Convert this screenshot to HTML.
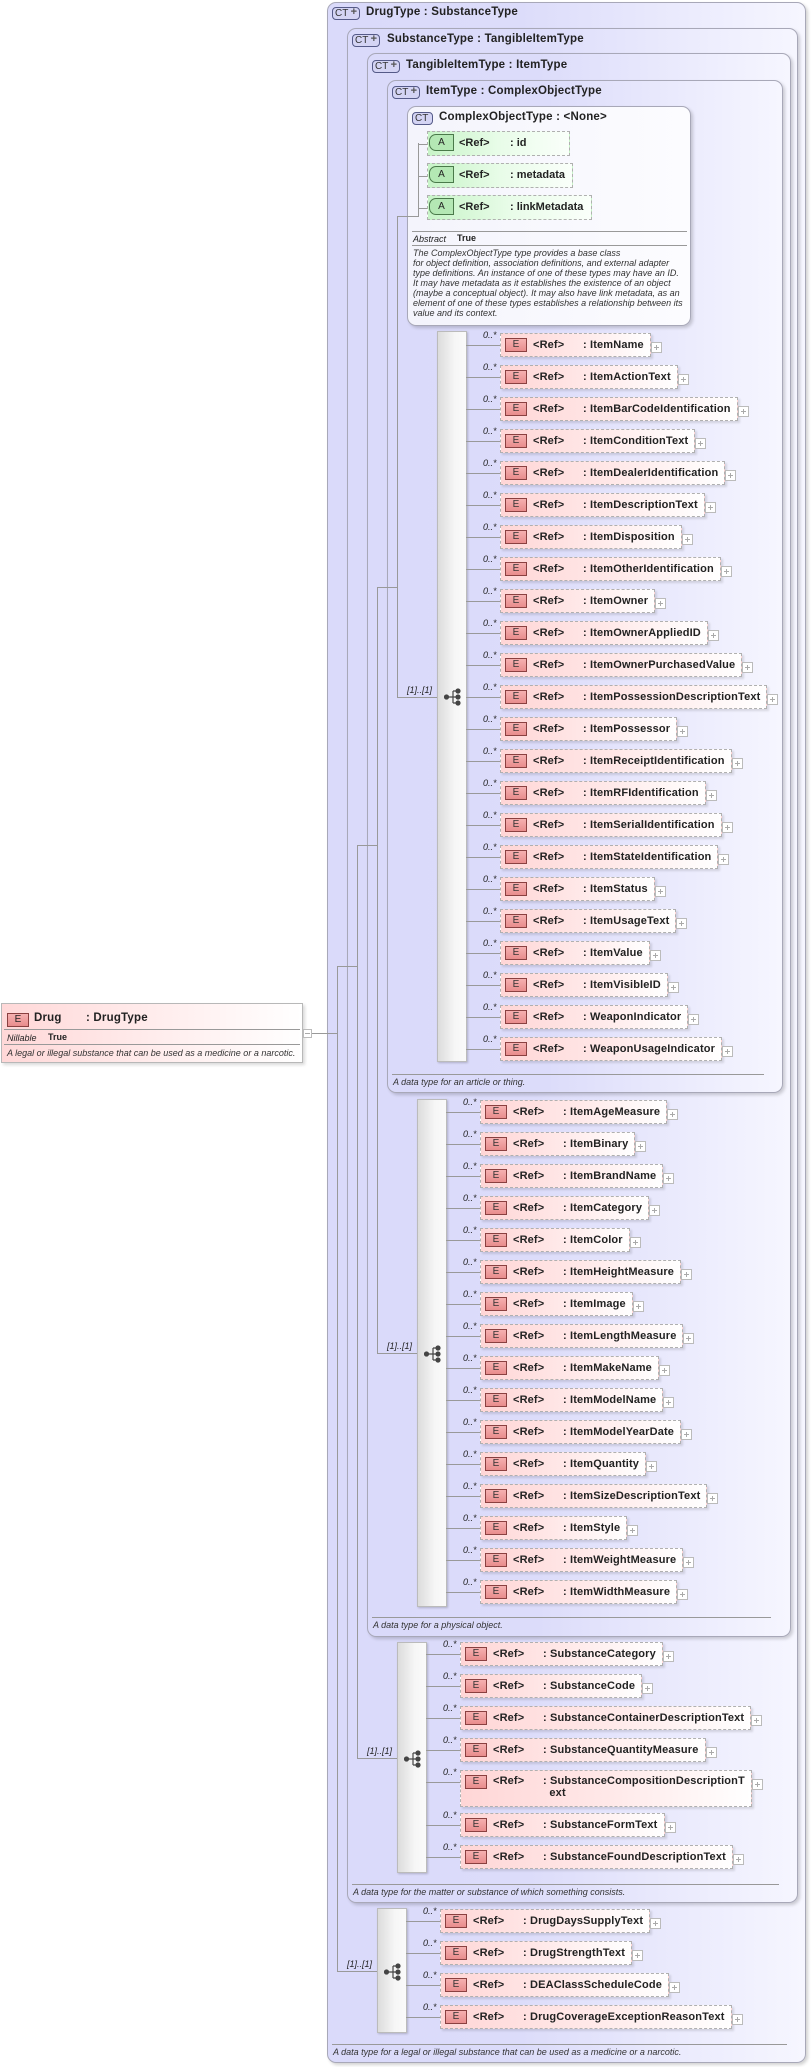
<!DOCTYPE html>
<html><head><meta charset="utf-8"><style>
*{margin:0;padding:0;box-sizing:border-box}
body{width:811px;height:2067px;background:#fff;position:relative;overflow:hidden;font-family:"Liberation Sans",Arial,sans-serif;color:#222}
.t{position:absolute;border:1px solid #a8a8b8;border-radius:9px;background:linear-gradient(90deg,#dadafa 0%,#dcdcfa 40%,#f6f6ff 100%);box-shadow:2px 2px 3px rgba(0,0,0,.18)}
.h{position:absolute;font-weight:bold;font-size:11.5px;white-space:nowrap;letter-spacing:.2px}
.ct{position:absolute;width:28px;height:13px;border:1px solid #555a88;border-radius:4px;background:#d4d4f4;font-size:10px;line-height:11px;color:#333;padding-left:2px}
.ct::after{content:"+";position:absolute;right:2px;top:-1px;font-weight:bold;font-size:11px;color:#555}
.l{position:absolute;background:#999}
.bar{position:absolute;border:1px solid #bbb;background:linear-gradient(90deg,#dcdcdc,#f6f6f6 60%,#fafafa);box-shadow:1px 1px 2px rgba(0,0,0,.2)}
.r{position:absolute;height:24px;border:1px dashed #b0b0b0;background:linear-gradient(90deg,#ffd6d6,#ffe8e8 50%,#fff);font-weight:bold;font-size:11px;letter-spacing:.15px;line-height:22px;white-space:nowrap;padding-left:32px;padding-right:6px;box-shadow:2px 2px 2px rgba(0,0,0,.12)}
.r i{position:absolute;left:4px;top:4px;width:22px;height:14px;border:1px solid #8a4040;background:linear-gradient(#f6b0b0,#e88c8c);font-style:normal;font-weight:normal;font-size:10px;line-height:12px;text-align:center;color:#333}
.r b{display:inline-block;width:50px}
.r::before{content:"";position:absolute;left:-35px;top:11px;width:34px;height:1px;background:#999}
.r::after{content:"";position:absolute;right:-12px;top:8px;width:9px;height:9px;border:1px solid #bbb;background:linear-gradient(#aaa,#aaa) center/5px 1px no-repeat,linear-gradient(#aaa,#aaa) center/1px 5px no-repeat,#fff}
.r em{position:absolute;left:-18px;top:-4px;font-size:9px;font-weight:normal;line-height:10px;letter-spacing:0}
.a{position:absolute;height:25px;border:1px dashed #b0b0b0;background:linear-gradient(90deg,#c8f4c8,#e8fce8 50%,#fafffa);font-weight:bold;font-size:11px;line-height:23px;white-space:nowrap;padding-left:31px;padding-right:6px;left:427px}
.a i{position:absolute;left:1px;top:2px;width:25px;height:17px;border:1px solid #4a7a4a;border-radius:7px 0 0 7px;background:#b4e8b4;font-style:normal;font-weight:normal;font-size:10px;line-height:15px;text-align:center}
.a b{display:inline-block;width:51px}
.a::before{content:"";position:absolute;left:-10px;top:12px;width:9px;height:1px;background:#999}
.d{position:absolute;font-size:9px;font-style:italic;color:#333;white-space:nowrap}
.hr{position:absolute;height:1px;background:#999}
.m{position:absolute;font-size:9px;font-style:italic;white-space:nowrap}
svg.s{position:absolute}
</style></head><body>

<div class="t" style="left:327px;top:2px;width:479px;height:2061px"></div>
<div class="ct" style="left:332px;top:7px">CT</div><div class="h" style="left:366px;top:6px">DrugType : SubstanceType</div>
<div class="t" style="left:347px;top:28px;width:451px;height:1875px"></div>
<div class="ct" style="left:352px;top:34px">CT</div><div class="h" style="left:387px;top:33px">SubstanceType : TangibleItemType</div>
<div class="t" style="left:367px;top:53px;width:424px;height:1584px"></div>
<div class="ct" style="left:372px;top:60px">CT</div><div class="h" style="left:406px;top:59px">TangibleItemType : ItemType</div>
<div class="t" style="left:387px;top:80px;width:396px;height:1013px"></div>
<div class="ct" style="left:392px;top:86px">CT</div><div class="h" style="left:426px;top:85px">ItemType : ComplexObjectType</div>
<div class="t" style="left:407px;top:106px;width:284px;height:220px;background:linear-gradient(90deg,#f4f4fc,#fcfcff)"></div>
<div class="ct" style="left:412px;top:112px;width:21px">CT</div><div class="h" style="left:439px;top:111px">ComplexObjectType : &lt;None&gt;</div>
<style>.ct[style*="width:21px"]::after{content:""}</style>

<div class="l" style="left:418px;top:143px;width:1px;height:74px"></div>
<div class="a" style="top:131px;width:143px"><i>A</i><b>&lt;Ref&gt;</b>: id</div>
<div class="a" style="top:163px;width:146px"><i>A</i><b>&lt;Ref&gt;</b>: metadata</div>
<div class="a" style="top:195px;width:165px"><i>A</i><b>&lt;Ref&gt;</b>: linkMetadata</div>
<div class="hr" style="left:412px;top:231px;width:275px"></div>
<div class="m" style="left:413px;top:234px">Abstract</div><div class="m" style="left:457px;top:233px;font-style:normal;font-weight:bold">True</div>
<div class="hr" style="left:412px;top:245px;width:275px"></div>
<div class="d" style="left:413px;top:248px;line-height:10px">The ComplexObjectType type provides a base class<br>for object definition, association definitions, and external adapter<br>type definitions. An instance of one of these types may have an ID.<br>It may have metadata as it establishes the existence of an object<br>(maybe a conceptual object). It may also have link metadata, as an<br>element of one of these types establishes a relationship between its<br>value and its context.</div>

<div class="l" style="left:397px;top:216px;width:22px;height:1px"></div>
<div class="l" style="left:397px;top:216px;width:1px;height:481px"></div>
<div class="l" style="left:397px;top:697px;width:40px;height:1px"></div>
<div class="l" style="left:377px;top:587px;width:20px;height:1px"></div>
<div class="l" style="left:377px;top:587px;width:1px;height:766px"></div>
<div class="l" style="left:377px;top:1353px;width:40px;height:1px"></div>
<div class="l" style="left:357px;top:845px;width:20px;height:1px"></div>
<div class="l" style="left:357px;top:845px;width:1px;height:913px"></div>
<div class="l" style="left:357px;top:1758px;width:40px;height:1px"></div>
<div class="l" style="left:337px;top:966px;width:20px;height:1px"></div>
<div class="l" style="left:337px;top:966px;width:1px;height:1005px"></div>
<div class="l" style="left:337px;top:1971px;width:40px;height:1px"></div>
<div class="l" style="left:312px;top:1033px;width:25px;height:1px"></div>

<div class="m" style="left:407px;top:685px">[1]..[1]</div>
<div class="m" style="left:387px;top:1341px">[1]..[1]</div>
<div class="m" style="left:367px;top:1746px">[1]..[1]</div>
<div class="m" style="left:347px;top:1959px">[1]..[1]</div>

<div class="bar" style="left:437px;top:331px;width:30px;height:731px"></div>
<div class="bar" style="left:417px;top:1099px;width:30px;height:508px"></div>
<div class="bar" style="left:397px;top:1642px;width:30px;height:231px"></div>
<div class="bar" style="left:377px;top:1908px;width:30px;height:125px"></div>

<svg class="s" style="left:444px;top:688px" width="18" height="18" viewBox="0 0 18 18"><g fill="#444" stroke="#444" stroke-width="1.2"><circle cx="2.5" cy="9" r="2"/><circle cx="14" cy="3" r="2"/><circle cx="14" cy="9" r="2"/><circle cx="14" cy="15" r="2"/><path d="M2.5 9H14M9 3V15M9 3H14M9 15H14" fill="none"/></g></svg>
<svg class="s" style="left:424px;top:1345px" width="18" height="18" viewBox="0 0 18 18"><g fill="#444" stroke="#444" stroke-width="1.2"><circle cx="2.5" cy="9" r="2"/><circle cx="14" cy="3" r="2"/><circle cx="14" cy="9" r="2"/><circle cx="14" cy="15" r="2"/><path d="M2.5 9H14M9 3V15M9 3H14M9 15H14" fill="none"/></g></svg>
<svg class="s" style="left:404px;top:1750px" width="18" height="18" viewBox="0 0 18 18"><g fill="#444" stroke="#444" stroke-width="1.2"><circle cx="2.5" cy="9" r="2"/><circle cx="14" cy="3" r="2"/><circle cx="14" cy="9" r="2"/><circle cx="14" cy="15" r="2"/><path d="M2.5 9H14M9 3V15M9 3H14M9 15H14" fill="none"/></g></svg>
<svg class="s" style="left:384px;top:1963px" width="18" height="18" viewBox="0 0 18 18"><g fill="#444" stroke="#444" stroke-width="1.2"><circle cx="2.5" cy="9" r="2"/><circle cx="14" cy="3" r="2"/><circle cx="14" cy="9" r="2"/><circle cx="14" cy="15" r="2"/><path d="M2.5 9H14M9 3V15M9 3H14M9 15H14" fill="none"/></g></svg>

<div class="r" style="left:500px;top:333px"><em>0..*</em><i>E</i><b>&lt;Ref&gt;</b>: ItemName</div>
<div class="r" style="left:500px;top:365px"><em>0..*</em><i>E</i><b>&lt;Ref&gt;</b>: ItemActionText</div>
<div class="r" style="left:500px;top:397px"><em>0..*</em><i>E</i><b>&lt;Ref&gt;</b>: ItemBarCodeIdentification</div>
<div class="r" style="left:500px;top:429px"><em>0..*</em><i>E</i><b>&lt;Ref&gt;</b>: ItemConditionText</div>
<div class="r" style="left:500px;top:461px"><em>0..*</em><i>E</i><b>&lt;Ref&gt;</b>: ItemDealerIdentification</div>
<div class="r" style="left:500px;top:493px"><em>0..*</em><i>E</i><b>&lt;Ref&gt;</b>: ItemDescriptionText</div>
<div class="r" style="left:500px;top:525px"><em>0..*</em><i>E</i><b>&lt;Ref&gt;</b>: ItemDisposition</div>
<div class="r" style="left:500px;top:557px"><em>0..*</em><i>E</i><b>&lt;Ref&gt;</b>: ItemOtherIdentification</div>
<div class="r" style="left:500px;top:589px"><em>0..*</em><i>E</i><b>&lt;Ref&gt;</b>: ItemOwner</div>
<div class="r" style="left:500px;top:621px"><em>0..*</em><i>E</i><b>&lt;Ref&gt;</b>: ItemOwnerAppliedID</div>
<div class="r" style="left:500px;top:653px"><em>0..*</em><i>E</i><b>&lt;Ref&gt;</b>: ItemOwnerPurchasedValue</div>
<div class="r" style="left:500px;top:685px"><em>0..*</em><i>E</i><b>&lt;Ref&gt;</b>: ItemPossessionDescriptionText</div>
<div class="r" style="left:500px;top:717px"><em>0..*</em><i>E</i><b>&lt;Ref&gt;</b>: ItemPossessor</div>
<div class="r" style="left:500px;top:749px"><em>0..*</em><i>E</i><b>&lt;Ref&gt;</b>: ItemReceiptIdentification</div>
<div class="r" style="left:500px;top:781px"><em>0..*</em><i>E</i><b>&lt;Ref&gt;</b>: ItemRFIdentification</div>
<div class="r" style="left:500px;top:813px"><em>0..*</em><i>E</i><b>&lt;Ref&gt;</b>: ItemSerialIdentification</div>
<div class="r" style="left:500px;top:845px"><em>0..*</em><i>E</i><b>&lt;Ref&gt;</b>: ItemStateIdentification</div>
<div class="r" style="left:500px;top:877px"><em>0..*</em><i>E</i><b>&lt;Ref&gt;</b>: ItemStatus</div>
<div class="r" style="left:500px;top:909px"><em>0..*</em><i>E</i><b>&lt;Ref&gt;</b>: ItemUsageText</div>
<div class="r" style="left:500px;top:941px"><em>0..*</em><i>E</i><b>&lt;Ref&gt;</b>: ItemValue</div>
<div class="r" style="left:500px;top:973px"><em>0..*</em><i>E</i><b>&lt;Ref&gt;</b>: ItemVisibleID</div>
<div class="r" style="left:500px;top:1005px"><em>0..*</em><i>E</i><b>&lt;Ref&gt;</b>: WeaponIndicator</div>
<div class="r" style="left:500px;top:1037px"><em>0..*</em><i>E</i><b>&lt;Ref&gt;</b>: WeaponUsageIndicator</div>
<div class="hr" style="left:392px;top:1074px;width:372px"></div>
<div class="d" style="left:393px;top:1077px">A data type for an article or thing.</div>

<div class="r" style="left:480px;top:1100px"><em>0..*</em><i>E</i><b>&lt;Ref&gt;</b>: ItemAgeMeasure</div>
<div class="r" style="left:480px;top:1132px"><em>0..*</em><i>E</i><b>&lt;Ref&gt;</b>: ItemBinary</div>
<div class="r" style="left:480px;top:1164px"><em>0..*</em><i>E</i><b>&lt;Ref&gt;</b>: ItemBrandName</div>
<div class="r" style="left:480px;top:1196px"><em>0..*</em><i>E</i><b>&lt;Ref&gt;</b>: ItemCategory</div>
<div class="r" style="left:480px;top:1228px"><em>0..*</em><i>E</i><b>&lt;Ref&gt;</b>: ItemColor</div>
<div class="r" style="left:480px;top:1260px"><em>0..*</em><i>E</i><b>&lt;Ref&gt;</b>: ItemHeightMeasure</div>
<div class="r" style="left:480px;top:1292px"><em>0..*</em><i>E</i><b>&lt;Ref&gt;</b>: ItemImage</div>
<div class="r" style="left:480px;top:1324px"><em>0..*</em><i>E</i><b>&lt;Ref&gt;</b>: ItemLengthMeasure</div>
<div class="r" style="left:480px;top:1356px"><em>0..*</em><i>E</i><b>&lt;Ref&gt;</b>: ItemMakeName</div>
<div class="r" style="left:480px;top:1388px"><em>0..*</em><i>E</i><b>&lt;Ref&gt;</b>: ItemModelName</div>
<div class="r" style="left:480px;top:1420px"><em>0..*</em><i>E</i><b>&lt;Ref&gt;</b>: ItemModelYearDate</div>
<div class="r" style="left:480px;top:1452px"><em>0..*</em><i>E</i><b>&lt;Ref&gt;</b>: ItemQuantity</div>
<div class="r" style="left:480px;top:1484px"><em>0..*</em><i>E</i><b>&lt;Ref&gt;</b>: ItemSizeDescriptionText</div>
<div class="r" style="left:480px;top:1516px"><em>0..*</em><i>E</i><b>&lt;Ref&gt;</b>: ItemStyle</div>
<div class="r" style="left:480px;top:1548px"><em>0..*</em><i>E</i><b>&lt;Ref&gt;</b>: ItemWeightMeasure</div>
<div class="r" style="left:480px;top:1580px"><em>0..*</em><i>E</i><b>&lt;Ref&gt;</b>: ItemWidthMeasure</div>
<div class="hr" style="left:372px;top:1617px;width:399px"></div>
<div class="d" style="left:373px;top:1620px">A data type for a physical object.</div>

<div class="r" style="left:460px;top:1642px"><em>0..*</em><i>E</i><b>&lt;Ref&gt;</b>: SubstanceCategory</div>
<div class="r" style="left:460px;top:1674px"><em>0..*</em><i>E</i><b>&lt;Ref&gt;</b>: SubstanceCode</div>
<div class="r" style="left:460px;top:1706px"><em>0..*</em><i>E</i><b>&lt;Ref&gt;</b>: SubstanceContainerDescriptionText</div>
<div class="r" style="left:460px;top:1738px"><em>0..*</em><i>E</i><b>&lt;Ref&gt;</b>: SubstanceQuantityMeasure</div>
<div class="r" style="left:460px;top:1770px;height:37px;line-height:12px;padding-top:4px"><em>0..*</em><i>E</i><b style="vertical-align:top">&lt;Ref&gt;</b><span style="display:inline-block">: SubstanceCompositionDescriptionT<br>&nbsp;&nbsp;ext</span></div>
<div class="r" style="left:460px;top:1813px"><em>0..*</em><i>E</i><b>&lt;Ref&gt;</b>: SubstanceFormText</div>
<div class="r" style="left:460px;top:1845px"><em>0..*</em><i>E</i><b>&lt;Ref&gt;</b>: SubstanceFoundDescriptionText</div>
<div class="hr" style="left:352px;top:1884px;width:427px"></div>
<div class="d" style="left:353px;top:1887px">A data type for the matter or substance of which something consists.</div>

<div class="r" style="left:440px;top:1909px"><em>0..*</em><i>E</i><b>&lt;Ref&gt;</b>: DrugDaysSupplyText</div>
<div class="r" style="left:440px;top:1941px"><em>0..*</em><i>E</i><b>&lt;Ref&gt;</b>: DrugStrengthText</div>
<div class="r" style="left:440px;top:1973px"><em>0..*</em><i>E</i><b>&lt;Ref&gt;</b>: DEAClassScheduleCode</div>
<div class="r" style="left:440px;top:2005px"><em>0..*</em><i>E</i><b>&lt;Ref&gt;</b>: DrugCoverageExceptionReasonText</div>
<div class="hr" style="left:332px;top:2044px;width:455px"></div>
<div class="d" style="left:333px;top:2047px">A data type for a legal or illegal substance that can be used as a medicine or a narcotic.</div>

<div style="position:absolute;left:1px;top:1003px;width:302px;height:60px;border:1px solid #b8b8b8;background:linear-gradient(90deg,#ffd8d8,#ffecec 50%,#fff);box-shadow:2px 2px 3px rgba(0,0,0,.15)">
 <div style="position:absolute;left:5px;top:9px;width:22px;height:14px;border:1px solid #8a4040;background:linear-gradient(#f6b0b0,#e88c8c);font-size:10px;line-height:12px;text-align:center">E</div>
 <div class="h" style="left:32px;top:8px">Drug</div><div class="h" style="left:84px;top:8px">: DrugType</div>
 <div class="hr" style="left:2px;top:25px;width:296px"></div>
 <div class="m" style="left:5px;top:29px">Nillable</div><div class="m" style="left:46px;top:28px;font-style:normal;font-weight:bold">True</div>
 <div class="hr" style="left:2px;top:40px;width:296px"></div>
 <div class="d" style="left:5px;top:44px">A legal or illegal substance that can be used as a medicine or a narcotic.</div>
</div>
<div style="position:absolute;left:303px;top:1029px;width:9px;height:9px;border:1px solid #bbb;background:linear-gradient(#aaa,#aaa) center/5px 1px no-repeat,#fff"></div>
</body></html>
